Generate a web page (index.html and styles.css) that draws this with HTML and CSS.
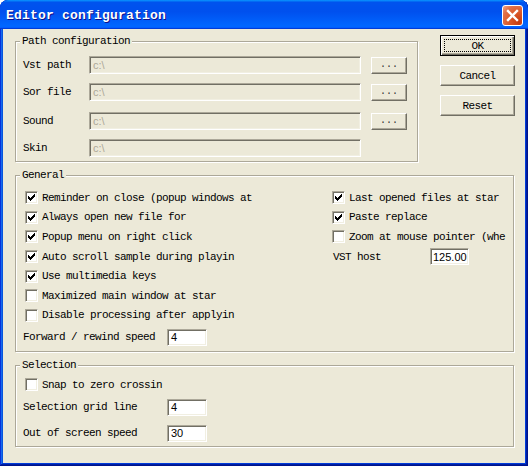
FILE: index.html
```html
<!DOCTYPE html>
<html>
<head>
<meta charset="utf-8">
<link rel="stylesheet" href="styles.css">
</head>
<body>
<div class="window">
  <div class="titlebar">
    <span class="title">Editor configuration</span>
    <span class="close"><svg width="21" height="21" viewBox="0 0 21 21"><path d="M6 6L15 15M15 6L6 15" stroke="#fff" stroke-width="2.4" stroke-linecap="square"/></svg></span>
  </div>
  <div class="client">
    <div class="top">
      <fieldset class="group path">
        <legend>Path configuration</legend>
        <div class="path-body">
          <div class="path-row"><span class="plabel">Vst path</span><span class="edit disabled">c:\</span><span class="btn browse">...</span></div>
          <div class="path-row"><span class="plabel">Sor file</span><span class="edit disabled">c:\</span><span class="btn browse">...</span></div>
          <div class="path-row wide"><span class="plabel">Sound</span><span class="edit disabled">c:\</span><span class="btn browse">...</span></div>
          <div class="path-row"><span class="plabel">Skin</span><span class="edit disabled">c:\</span></div>
        </div>
      </fieldset>
      <div class="actions">
        <span class="btn action default">OK</span>
        <span class="btn action">Cancel</span>
        <span class="btn action">Reset</span>
      </div>
    </div>

    <fieldset class="group general">
      <legend>General</legend>
      <div class="general-body">
        <div class="col">
          <div class="check"><span class="box"><svg class="tick" width="11" height="11" viewBox="1 1 11 11"><path d="M3 5h1v3H3zM4 6h1v3H4zM5 7h1v3H5zM6 6h1v3H6zM7 5h1v3H7zM8 4h1v3H8zM9 3h1v3H9z"/></svg></span><span class="t">Reminder on close (popup windows at</span></div>
          <div class="check"><span class="box"><svg class="tick" width="11" height="11" viewBox="1 1 11 11"><path d="M3 5h1v3H3zM4 6h1v3H4zM5 7h1v3H5zM6 6h1v3H6zM7 5h1v3H7zM8 4h1v3H8zM9 3h1v3H9z"/></svg></span><span class="t">Always open new file for</span></div>
          <div class="check"><span class="box"><svg class="tick" width="11" height="11" viewBox="1 1 11 11"><path d="M3 5h1v3H3zM4 6h1v3H4zM5 7h1v3H5zM6 6h1v3H6zM7 5h1v3H7zM8 4h1v3H8zM9 3h1v3H9z"/></svg></span><span class="t">Popup menu on right click</span></div>
          <div class="check"><span class="box"><svg class="tick" width="11" height="11" viewBox="1 1 11 11"><path d="M3 5h1v3H3zM4 6h1v3H4zM5 7h1v3H5zM6 6h1v3H6zM7 5h1v3H7zM8 4h1v3H8zM9 3h1v3H9z"/></svg></span><span class="t">Auto scroll sample during playin</span></div>
          <div class="check"><span class="box"><svg class="tick" width="11" height="11" viewBox="1 1 11 11"><path d="M3 5h1v3H3zM4 6h1v3H4zM5 7h1v3H5zM6 6h1v3H6zM7 5h1v3H7zM8 4h1v3H8zM9 3h1v3H9z"/></svg></span><span class="t">Use multimedia keys</span></div>
          <div class="check"><span class="box"></span><span class="t">Maximized main window at star</span></div>
          <div class="check"><span class="box"></span><span class="t">Disable processing after applyin</span></div>
          <div class="field fwd"><span class="flabel">Forward / rewind speed</span><span class="edit num">4</span></div>
        </div>
        <div class="col">
          <div class="check"><span class="box"><svg class="tick" width="11" height="11" viewBox="1 1 11 11"><path d="M3 5h1v3H3zM4 6h1v3H4zM5 7h1v3H5zM6 6h1v3H6zM7 5h1v3H7zM8 4h1v3H8zM9 3h1v3H9z"/></svg></span><span class="t">Last opened files at star</span></div>
          <div class="check"><span class="box"><svg class="tick" width="11" height="11" viewBox="1 1 11 11"><path d="M3 5h1v3H3zM4 6h1v3H4zM5 7h1v3H5zM6 6h1v3H6zM7 5h1v3H7zM8 4h1v3H8zM9 3h1v3H9z"/></svg></span><span class="t">Paste replace</span></div>
          <div class="check"><span class="box"></span><span class="t">Zoom at mouse pointer (whe</span></div>
          <div class="vst"><span class="vlabel">VST host</span><span class="edit num vnum">125.00</span></div>
        </div>
      </div>
    </fieldset>

    <fieldset class="group selection">
      <legend>Selection</legend>
      <div class="selection-body">
        <div class="check snap"><span class="box"></span><span class="t">Snap to zero crossin</span></div>
        <div class="field srow"><span class="flabel">Selection grid line</span><span class="edit num">4</span></div>
        <div class="field srow"><span class="flabel">Out of screen speed</span><span class="edit num">30</span></div>
      </div>
    </fieldset>
  </div>
</div>
</body>
</html>
```

FILE: styles.css
```css
html, body {
  margin: 0;
  padding: 0;
  background: #ffffff;
}

body {
  font-family: "Liberation Mono", "DejaVu Sans Mono", monospace;
  font-size: 11px;
  letter-spacing: -0.6px;
  color: #000;
}

.window {
  width: 528px;
  height: 466px;
  display: flex;
  flex-direction: column;
  background: #0454e4;
  border-radius: 8px 8px 0 0;
  overflow: hidden;
  box-shadow: inset -1px -1px #00138c, inset 1px 1px #0831d9, inset -2px -2px #001ea0, inset 2px 2px #166aee, inset -3px -3px #003bda, inset 3px 3px #0855dd;
}

.titlebar {
  height: 29px;
  flex: none;
  box-sizing: border-box;
  padding: 2px 5px 0 6px;
  display: flex;
  align-items: center;
  border-radius: 8px 8px 0 0;
  background: linear-gradient(180deg, #0997ff 0%, #0053ee 8%, #0050ee 40%, #0066ff 88%, #0066ff 93%, #005bff 95%, #003dd7 96%, #003dd7 100%);
}

.title {
  flex: 1;
  color: #fff;
  font-weight: bold;
  font-size: 13px;
  letter-spacing: 0.2px;
  text-shadow: 1px 1px #0f1089;
  white-space: nowrap;
}

.close {
  width: 21px;
  height: 21px;
  box-sizing: border-box;
  border: 1px solid #fff;
  border-radius: 3px;
  display: flex;
  align-items: center;
  justify-content: center;
  background: radial-gradient(circle at 85% 85%, #c53a10 0%, #dc5a2a 45%, #e0714a 75%, #f2a68a 100%);
}

.close svg {
  display: block;
  margin: -1px;
}

.client {
  flex: 1;
  margin: 0 3px 3px 3px;
  background: #ece9d8;
  box-sizing: border-box;
  padding: 6px 11px 0 12px;
  display: flex;
  flex-direction: column;
}

.top {
  display: flex;
  align-items: flex-start;
}

.group {
  margin: 0;
  padding: 0;
  min-width: 0;
  box-sizing: border-box;
  border: 1px solid #aca899;
  box-shadow: inset 1px 1px #fff, 1px 1px #fff;
}

.group legend {
  margin-left: 4px;
  padding: 0 2px;
  line-height: 13px;
  font-size: 11px;
  background: #ece9d8;
}

.path {
  width: 403px;
  flex: none;
}

.path-body {
  padding: 8px 0 4px 7px;
  display: flex;
  flex-direction: column;
}

.path-row {
  display: flex;
  align-items: center;
  height: 18px;
}

.path-row + .path-row {
  margin-top: 9px;
}

.path-row.wide {
  margin-top: 11px;
}

.plabel {
  width: 66px;
  flex: none;
  white-space: nowrap;
}

.edit {
  box-sizing: border-box;
  flex: none;
  border: 1px solid;
  border-color: #aca899 #fff #fff #aca899;
  box-shadow: inset 1px 1px #716f64, inset -1px -1px #f1efe2;
  font-family: "Liberation Sans", Arial, sans-serif;
  font-size: 11px;
  letter-spacing: 0;
  padding-left: 3px;
  display: flex;
  align-items: center;
  background: #fff;
  color: #000;
}

.edit.disabled {
  width: 272px;
  height: 18px;
  background: #ece9d8;
  color: #aca899;
}

.btn {
  box-sizing: border-box;
  display: flex;
  align-items: center;
  justify-content: center;
  background: #ece9d8;
  border: 1px solid;
  border-color: #fff #716f64 #716f64 #fff;
  box-shadow: inset -1px -1px #aca899;
  white-space: nowrap;
}

.browse {
  width: 36px;
  height: 17px;
  margin-left: 10px;
  flex: none;
  font-size: 10px;
  letter-spacing: 0;
  color: #333;
  padding-bottom: 2px;
}

.actions {
  margin-left: 22px;
  display: flex;
  flex-direction: column;
  gap: 9px;
}

.action {
  width: 75px;
  height: 21px;
}

.default {
  position: relative;
  border: 1px solid #000;
  box-shadow: inset 1px 1px #fff, inset -1px -1px #716f64, inset -2px -2px #aca899;
}

.default::after {
  content: "";
  position: absolute;
  left: 3px;
  top: 3px;
  right: 3px;
  bottom: 3px;
  border: 1px dotted #000;
}

.general {
  width: 499px;
  margin-top: 7px;
}

.general-body {
  display: grid;
  grid-template-columns: 307px 1fr;
  padding: 6px 0 4px 9px;
}

.col {
  display: flex;
  flex-direction: column;
}

.check {
  display: flex;
  align-items: center;
  height: 19.6px;
}

.box {
  width: 13px;
  height: 13px;
  flex: none;
  box-sizing: border-box;
  margin-right: 4px;
  background: #fff;
  border: 1px solid;
  border-color: #aca899 #fff #fff #aca899;
  box-shadow: inset 1px 1px #716f64, inset -1px -1px #f1efe2;
}

.tick {
  display: block;
  shape-rendering: crispEdges;
  fill: #000;
}

.t {
  white-space: nowrap;
}

.field {
  display: flex;
  align-items: center;
  margin-left: -2px;
}

.fwd {
  height: 20px;
  margin-top: 2px;
}

.flabel {
  width: 144px;
  flex: none;
  white-space: nowrap;
}

.num {
  width: 40px;
  height: 17px;
}

.vst {
  display: flex;
  align-items: center;
  height: 19.6px;
  margin-left: 1px;
}

.vlabel {
  width: 97px;
  flex: none;
}

.vnum {
  width: 39px;
  padding-left: 2px;
}

.selection {
  width: 499px;
  margin-top: 7px;
}

.selection-body {
  padding: 3px 0 0 9px;
  display: flex;
  flex-direction: column;
}

.snap {
  height: 19px;
}

.srow {
  height: 26px;
}
```
